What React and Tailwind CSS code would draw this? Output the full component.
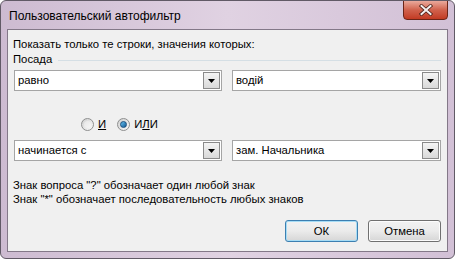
const Combo = ({ value, width }) => (
  <div className={`flex h-[21px] items-center border border-[#a5a5a5] bg-white ${width}`}>
    <span className="flex-1 pl-[3px] text-[11.3px] leading-[15px] text-black">{value}</span>
    <div className="mr-px flex h-[17px] w-[17px] items-center justify-center border border-[#8a8a8a] bg-gradient-to-b from-[#f4f4f4] to-[#d9d9d9]">
      <svg width="7" height="4" viewBox="0 0 7 4">
        <path d="M0 0h7L3.5 4z" fill="#000" />
      </svg>
    </div>
  </div>
);

const Radio = ({ checked }) => (
  <div className="flex h-[13px] w-[13px] items-center justify-center rounded-full border border-[#8e8f8f] bg-gradient-to-br from-[#d0d0d0] to-[#fafafa]">
    {checked ? (
      <div className="h-[7px] w-[7px] rounded-full border border-[#1b4f7e] bg-gradient-to-br from-[#63c1f0] to-[#165b96]" />
    ) : (
      <div className="h-[7px] w-[7px] rounded-full bg-gradient-to-br from-[#e6e6e6] to-[#f6f6f6]" />
    )}
  </div>
);

const Button = ({ label, primary }) => (
  <button
    className={`flex h-[22px] w-[73px] items-center justify-center rounded-[3px] border bg-gradient-to-b from-[#f2f2f2] via-[#ebebeb] to-[#d6d6d6] text-[11.3px] text-black ${
      primary ? 'border-[#3c7fb1] shadow-[inset_0_0_0_1px_#a6dcf5]' : 'border-[#707070] shadow-[inset_0_0_0_1px_#fcfcfc]'
    }`}
  >
    {label}
  </button>
);

export default function App() {
  return (
    <div
      className="relative flex h-[259px] w-[455px] flex-col overflow-hidden rounded-[6px] border border-[#615a66] bg-gradient-to-r from-[#cdbbd1] via-[#e0d2e2] to-[#d2c0d6] text-black"
      style={{ fontFamily: '"Liberation Sans", Arial, sans-serif' }}
    >
      {/* Title bar */}
      <div className="flex h-[28px] items-center pl-[8px] pt-px text-[12px]">Пользовательский автофильтр</div>
      <div className="absolute right-[6px] top-[-1px] flex h-[20px] w-[45px] items-center justify-center rounded-b-[4px] border border-[#6b2518] bg-gradient-to-b from-[#e9a99c] via-[#d0614c] to-[#c23a22]">
        <svg width="14" height="12" viewBox="0 0 14 12">
          <path d="M2.5 2L11.5 10M11.5 2L2.5 10" stroke="#4a2018" strokeWidth="3.6" strokeLinecap="square" />
          <path d="M2.5 2L11.5 10M11.5 2L2.5 10" stroke="#f4f0f0" strokeWidth="2" strokeLinecap="square" />
        </svg>
      </div>

      {/* Client area */}
      <div className="mx-[6px] mb-[6px] flex flex-1 flex-col border border-[#837888] bg-[#f0f0f0] pl-[5px] pr-[6px] pt-[7px] text-[11.3px]">
        <div className="leading-[15px]">Показать только те строки, значения которых:</div>
        <div className="flex h-[15px] items-center gap-[6px]">
          <span className="leading-[15px]">Посада</span>
          <div className="mt-px h-px flex-1 border-t border-[#d5dfe5]" />
        </div>

        <div className="ml-px mt-[3px] flex gap-[10px]">
          <Combo value="равно" width="w-[208px]" />
          <Combo value="водій" width="w-[209px]" />
        </div>

        <div className="mt-[26px] flex h-[15px] items-center pl-[68px]">
          <Radio />
          <span className="ml-[4px] leading-[15px]">
            <span className="underline">И</span>
          </span>
          <div className="ml-[11px]">
            <Radio checked />
          </div>
          <span className="ml-[4px] leading-[15px]">
            И<span className="underline">Л</span>И
          </span>
        </div>

        <div className="ml-px mt-[8px] flex gap-[10px]">
          <Combo value="начинается с" width="w-[208px]" />
          <Combo value="зам. Начальника" width="w-[209px]" />
        </div>

        <div className="mt-[17px] leading-[14px]">Знак вопроса "?" обозначает один любой знак</div>
        <div className="leading-[14px]">Знак "*" обозначает последовательность любых знаков</div>

        <div className="mt-[14px] flex justify-end gap-[10px]">
          <Button label="ОК" primary />
          <Button label="Отмена" />
        </div>
      </div>
    </div>
  );
}
